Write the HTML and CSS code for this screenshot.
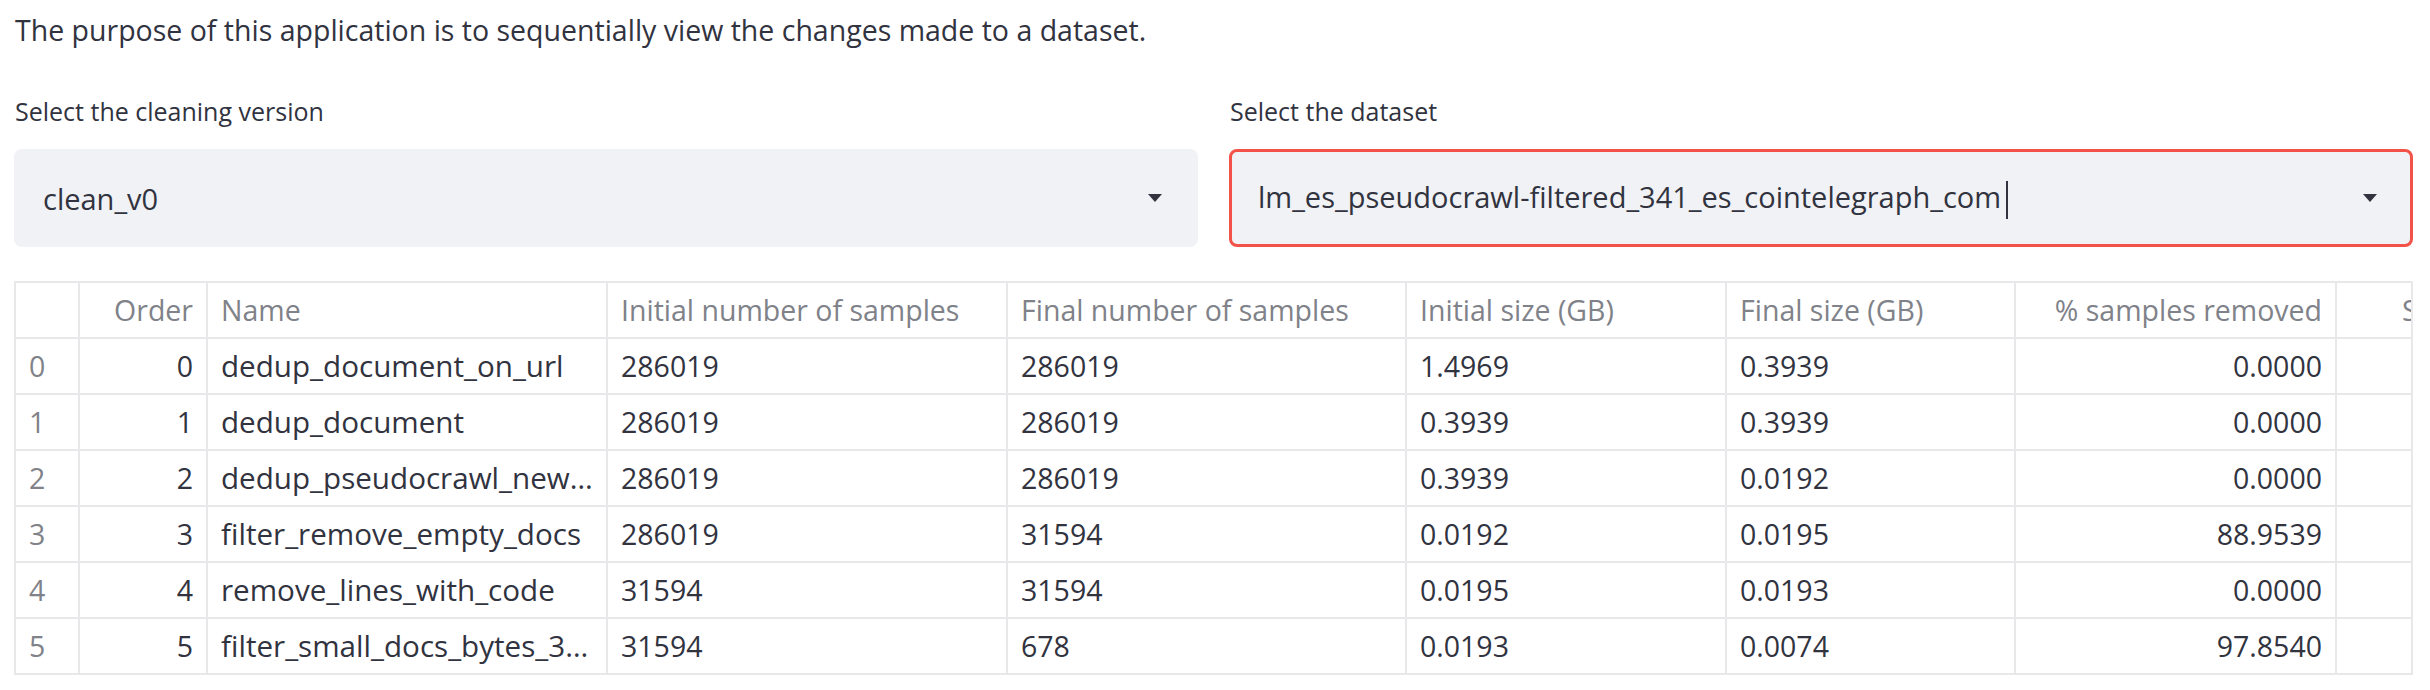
FILE: index.html
```html
<!DOCTYPE html>
<html>
<head>
<meta charset="utf-8">
<link rel="stylesheet" href="styles.css">
</head>
<body>
<div class="app">
  <p class="intro">The purpose of this application is to sequentially view the changes made to a dataset.</p>
  <div class="selects">
    <div class="field">
      <label class="label">Select the cleaning version</label>
      <div class="select"><span class="value">clean_v0</span><span class="arrow"></span></div>
    </div>
    <div class="field">
      <label class="label">Select the dataset</label>
      <div class="select focused"><span class="value">lm_es_pseudocrawl-filtered_341_es_cointelegraph_com<span class="caret"></span></span><span class="arrow"></span></div>
    </div>
  </div>
  <div class="frame">
    <div class="grid" role="table">
      <div class="cell head"></div>
      <div class="cell head num">Order</div>
      <div class="cell head">Name</div>
      <div class="cell head">Initial number of samples</div>
      <div class="cell head">Final number of samples</div>
      <div class="cell head">Initial size (GB)</div>
      <div class="cell head">Final size (GB)</div>
      <div class="cell head num">% samples removed</div>
      <div class="cell head cut">Size removed (%)</div>

      <div class="cell idx">0</div><div class="cell num">0</div><div class="cell name">dedup_document_on_url</div><div class="cell">286019</div><div class="cell">286019</div><div class="cell">1.4969</div><div class="cell">0.3939</div><div class="cell num">0.0000</div><div class="cell num">73.6856</div>
      <div class="cell idx">1</div><div class="cell num">1</div><div class="cell name">dedup_document</div><div class="cell">286019</div><div class="cell">286019</div><div class="cell">0.3939</div><div class="cell">0.3939</div><div class="cell num">0.0000</div><div class="cell num">0.0000</div>
      <div class="cell idx">2</div><div class="cell num">2</div><div class="cell name">dedup_pseudocrawl_newspapers</div><div class="cell">286019</div><div class="cell">286019</div><div class="cell">0.3939</div><div class="cell">0.0192</div><div class="cell num">0.0000</div><div class="cell num">95.1257</div>
      <div class="cell idx">3</div><div class="cell num">3</div><div class="cell name">filter_remove_empty_docs</div><div class="cell">286019</div><div class="cell">31594</div><div class="cell">0.0192</div><div class="cell">0.0195</div><div class="cell num">88.9539</div><div class="cell num">-1.5625</div>
      <div class="cell idx">4</div><div class="cell num">4</div><div class="cell name">remove_lines_with_code</div><div class="cell">31594</div><div class="cell">31594</div><div class="cell">0.0195</div><div class="cell">0.0193</div><div class="cell num">0.0000</div><div class="cell num">1.0256</div>
      <div class="cell idx">5</div><div class="cell num">5</div><div class="cell name">filter_small_docs_bytes_300_min</div><div class="cell">31594</div><div class="cell">678</div><div class="cell">0.0193</div><div class="cell">0.0074</div><div class="cell num">97.8540</div><div class="cell num">61.6580</div>
    </div>
  </div>
</div>
</body>
</html>
```
FILE: styles.css
```css
body { margin: 0; background: #fff; color: #31333f; font-family: "Open Sans", "Noto Sans", sans-serif; }
.app { padding: 0 17px 0 14px; }
.intro { margin: 0; padding: 10px 0 0 1px; font-size: 28.5px; line-height: 40px; }
.selects { display: grid; grid-template-columns: 1fr 1fr; gap: 31px; margin-top: 44px; }
.label { display: block; font-size: 25px; line-height: 34px; padding-left: 1px; margin-bottom: 21px; }
.select { height: 98px; box-sizing: border-box; background: #f0f2f6; border-radius: 8px; border: 3px solid #f0f2f6; display: flex; align-items: center; padding: 0 33px 0 26px; }
.focused { border-color: #f25248; }
.value { flex: 1; font-size: 29px; white-space: nowrap; }
.arrow { width: 0; height: 0; border-left: 7px solid transparent; border-right: 7px solid transparent; border-top: 8px solid #31333f; }
.caret { display: inline-block; width: 2px; height: 38px; margin-left: 5px; background: #31333f; vertical-align: middle; }
.frame { margin-top: 34px; border: 2px solid #e8e8ea; border-bottom: 0; overflow: hidden; }
.grid { display: grid; grid-template-columns: 64px 128px 400px 400px 399px 320px 289px 321px 400px; grid-auto-rows: 56px; width: max-content; font-size: 28.5px; }
.cell { box-sizing: border-box; border-right: 2px solid #e8e8ea; border-bottom: 2px solid #e8e8ea; padding: 0 13px; line-height: 54px; white-space: nowrap; overflow: hidden; text-overflow: ellipsis; }
.name { font-size: 29.6px; }
.head, .idx { color: #808289; }
.num { text-align: right; }
.cut { text-indent: 52px; }
```
